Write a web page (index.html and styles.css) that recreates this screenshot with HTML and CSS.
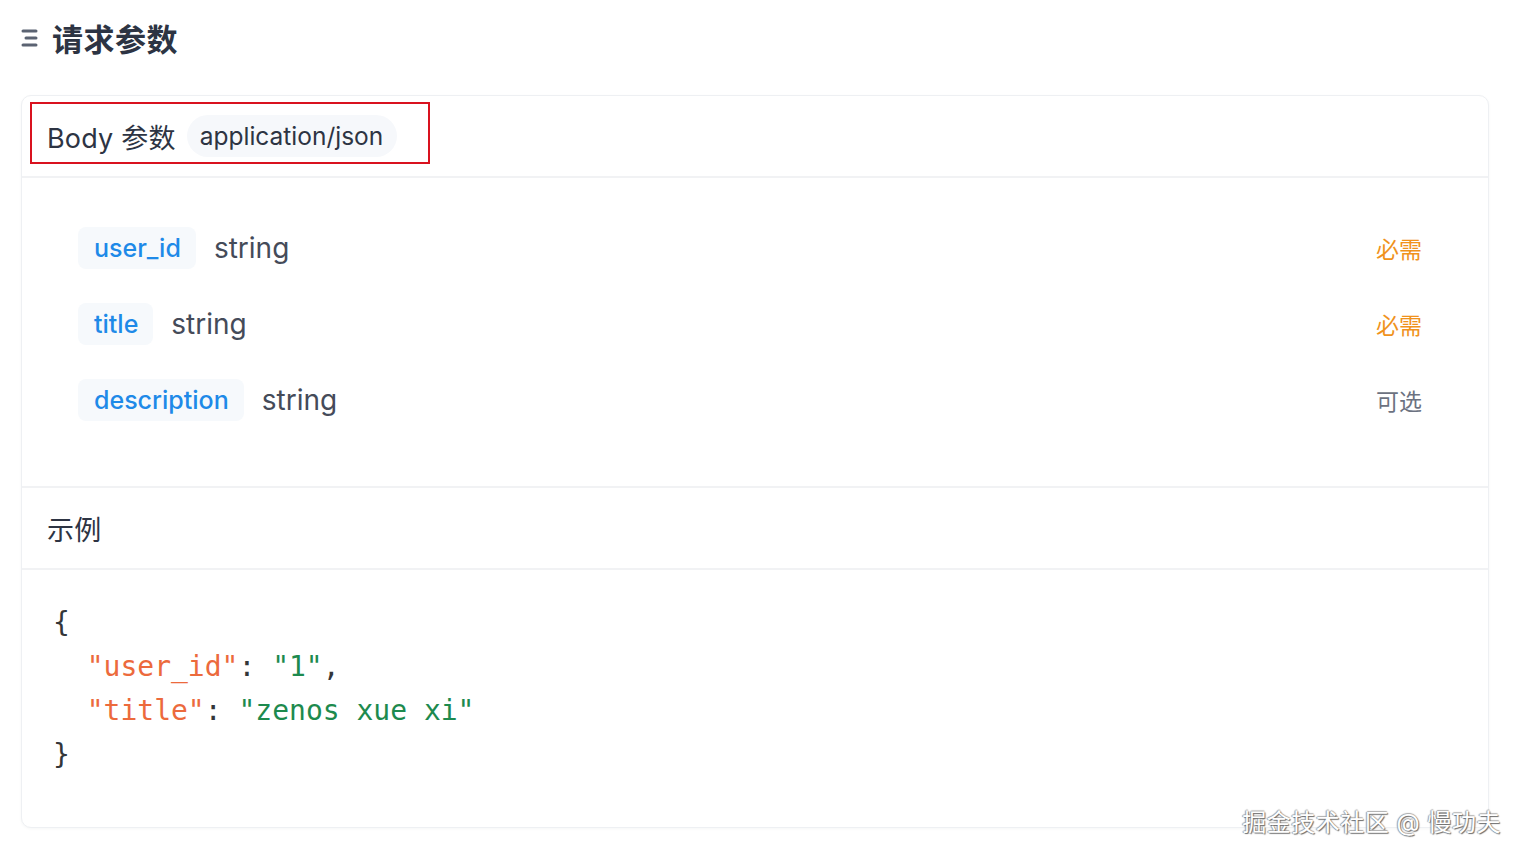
FILE: index.html
```html
<!DOCTYPE html>
<html lang="zh">
<head>
<meta charset="utf-8">
<title>请求参数</title>
<link rel="stylesheet" href="styles.css">
</head>
<body>
<div class="page">
  <h2 class="title">
    <svg class="title-icon" width="20" height="22" viewBox="0 0 20 22">
      <line x1="3" y1="5" x2="16" y2="5" />
      <line x1="6" y1="12" x2="16" y2="12" />
      <line x1="3" y1="19" x2="16" y2="19" />
    </svg>
    <span>请求参数</span>
  </h2>

  <div class="card">
    <div class="card-head">
      <span class="head-label">Body 参数</span>
      <span class="mime">application/json</span>
      <div class="highlight"></div>
    </div>

    <div class="params">
      <div class="param">
        <span class="pname">user_id</span>
        <span class="ptype">string</span>
        <span class="preq req">必需</span>
      </div>
      <div class="param">
        <span class="pname">title</span>
        <span class="ptype">string</span>
        <span class="preq req">必需</span>
      </div>
      <div class="param">
        <span class="pname">description</span>
        <span class="ptype">string</span>
        <span class="preq opt">可选</span>
      </div>
    </div>

    <div class="card-head example-head">
      <span class="head-label">示例</span>
    </div>

    <pre class="code"><span class="p">{</span>
  <span class="k">"user_id"</span><span class="p">: </span><span class="s">"1"</span><span class="p">,</span>
  <span class="k">"title"</span><span class="p">: </span><span class="s">"zenos xue xi"</span>
<span class="p">}</span></pre>
  </div>

  <div class="watermark">掘金技术社区 @ 慢功夫</div>
</div>
</body>
</html>
```

FILE: styles.css
```css
* { box-sizing: border-box; }

html, body {
  margin: 0;
  padding: 0;
  background: #ffffff;
}

body {
  font-family: Inter, "Noto Sans CJK SC", "Noto Sans", sans-serif;
  color: #2d3443;
}

.page {
  position: relative;
  width: 1524px;
  height: 858px;
  padding: 15px 35px 0 21px;
}

.title {
  display: flex;
  align-items: center;
  gap: 12px;
  margin: 0;
  height: 44px;
  font-size: 31px;
  font-weight: 700;
  color: #2d3443;
  letter-spacing: 0.5px;
}

.title-icon {
  flex: none;
  margin-left: -1px;
}

.title-icon line {
  stroke: #5b6372;
  stroke-width: 3;
  stroke-linecap: round;
}

.card {
  margin-top: 36px;
  width: 1468px;
  border: 1px solid #eef0f3;
  border-radius: 10px;
  box-shadow: 0 1px 3px rgba(30, 40, 60, 0.04);
  background: #ffffff;
}

.card-head {
  position: relative;
  display: flex;
  align-items: center;
  gap: 11px;
  height: 82px;
  padding-left: 25px;
  border-bottom: 2px solid #f1f2f4;
}

.head-label {
  font-size: 27px;
  color: #2d3443;
  letter-spacing: 0.2px;
}

.mime {
  display: inline-flex;
  align-items: center;
  height: 42px;
  padding: 0 14px 0 13px;
  border-radius: 21px;
  background: #f6f8fb;
  font-size: 24.5px;
  color: #2d3443;
}

.highlight {
  position: absolute;
  left: 8px;
  top: 6px;
  width: 400px;
  height: 62px;
  border: 2px solid #d9121f;
  pointer-events: none;
}

.params {
  padding: 32px 66px 48px 56px;
  border-bottom: 2px solid #f1f2f4;
}

.param {
  display: flex;
  align-items: center;
  height: 76px;
}

.pname {
  display: inline-flex;
  align-items: center;
  height: 42px;
  padding: 0 15px 0 16px;
  border-radius: 8px;
  background: #f6f9fc;
  font-size: 25px;
  font-weight: 500;
  color: #1e8ae8;
}

.ptype {
  margin-left: 18px;
  font-size: 28px;
  color: #454b59;
}

.preq {
  margin-left: auto;
  font-size: 23px;
}

.req { color: #f0921c; }
.opt { color: #6c7281; }

.example-head {
  gap: 0;
}

.code {
  margin: 0;
  padding: 31px 0 50px 31px;
  font-family: "DejaVu Sans Mono", "Liberation Mono", monospace;
  font-size: 28px;
  line-height: 44px;
  color: #333639;
}

.code .k { color: #ec6a3c; }
.code .s { color: #1d8a4e; }
.code .p { color: #333639; }

.watermark {
  position: absolute;
  right: 23px;
  top: 803px;
  font-size: 24px;
  color: #ffffff;
  letter-spacing: 0.5px;
  text-shadow: 1px 1px 1px #6b6b6b, -1px 0 1px #9a9a9a, 0 -1px 1px #b0b0b0;
}
```
